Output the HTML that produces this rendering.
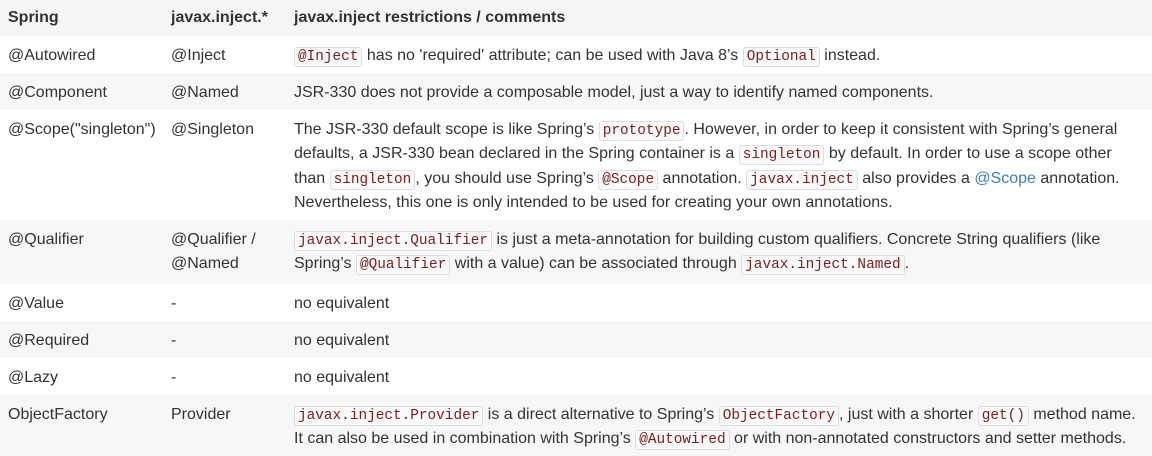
<!DOCTYPE html>
<html><head><meta charset="utf-8"><style>
body{margin:0;background:#fff;font-family:"Liberation Sans",Arial,sans-serif;font-size:16px;color:#333;width:1152px;height:456px;overflow:hidden}
.r{display:flex;overflow:hidden;box-sizing:border-box;padding-top:7.5px;line-height:24.5px;white-space:nowrap}
.r>div:nth-child(1){width:163px;padding-left:8px;flex:none}
.r>div:nth-child(2){width:123px;flex:none}
.r>div:nth-child(3){flex:1}
.h{font-weight:bold;background:#f5f5f5;padding-top:6px}
.g{background:#f7f7f7}
code{font-family:"Liberation Mono",monospace;font-size:14.4px;line-height:1;color:#7a2020;background:#f9f9f9;border:1px solid #ddd;border-radius:3px;padding:1px 3px}
a{color:#3f7fbf;text-decoration:none}
</style></head><body>
<div class="r h" style="height:36px"><div>Spring</div><div>javax.inject.*</div><div>javax.inject restrictions / comments</div></div>
<div class="r" style="height:37px"><div>@Autowired</div><div>@Inject</div><div><code>@Inject</code> has no 'required' attribute; can be used with Java 8’s <code>Optional</code> instead.</div></div>
<div class="r g" style="height:37px"><div>@Component</div><div>@Named</div><div>JSR-330 does not provide a composable model, just a way to identify named components.</div></div>
<div class="r" style="height:110px"><div>@Scope("singleton")</div><div>@Singleton</div><div>The JSR-330 default scope is like Spring’s <code>prototype</code>. However, in order to keep it consistent with Spring’s general<br>defaults, a JSR-330 bean declared in the Spring container is a <code>singleton</code> by default. In order to use a scope other<br>than <code>singleton</code>, you should use Spring’s <code>@Scope</code> annotation. <code>javax.inject</code> also provides a <a>@Scope</a> annotation.<br>Nevertheless, this one is only intended to be used for creating your own annotations.</div></div>
<div class="r g" style="height:64px"><div>@Qualifier</div><div>@Qualifier /<br>@Named</div><div><code>javax.inject.Qualifier</code> is just a meta-annotation for building custom qualifiers. Concrete String qualifiers (like<br>Spring’s <code>@Qualifier</code> with a value) can be associated through <code>javax.inject.Named</code>.</div></div>
<div class="r" style="height:37px"><div>@Value</div><div>-</div><div>no equivalent</div></div>
<div class="r g" style="height:37px"><div>@Required</div><div>-</div><div>no equivalent</div></div>
<div class="r" style="height:37px"><div>@Lazy</div><div>-</div><div>no equivalent</div></div>
<div class="r g" style="height:61px"><div>ObjectFactory</div><div>Provider</div><div><code>javax.inject.Provider</code> is a direct alternative to Spring’s <code>ObjectFactory</code>, just with a shorter <code>get()</code> method name.<br>It can also be used in combination with Spring’s <code>@Autowired</code> or with non-annotated constructors and setter methods.</div></div>
</body></html>
